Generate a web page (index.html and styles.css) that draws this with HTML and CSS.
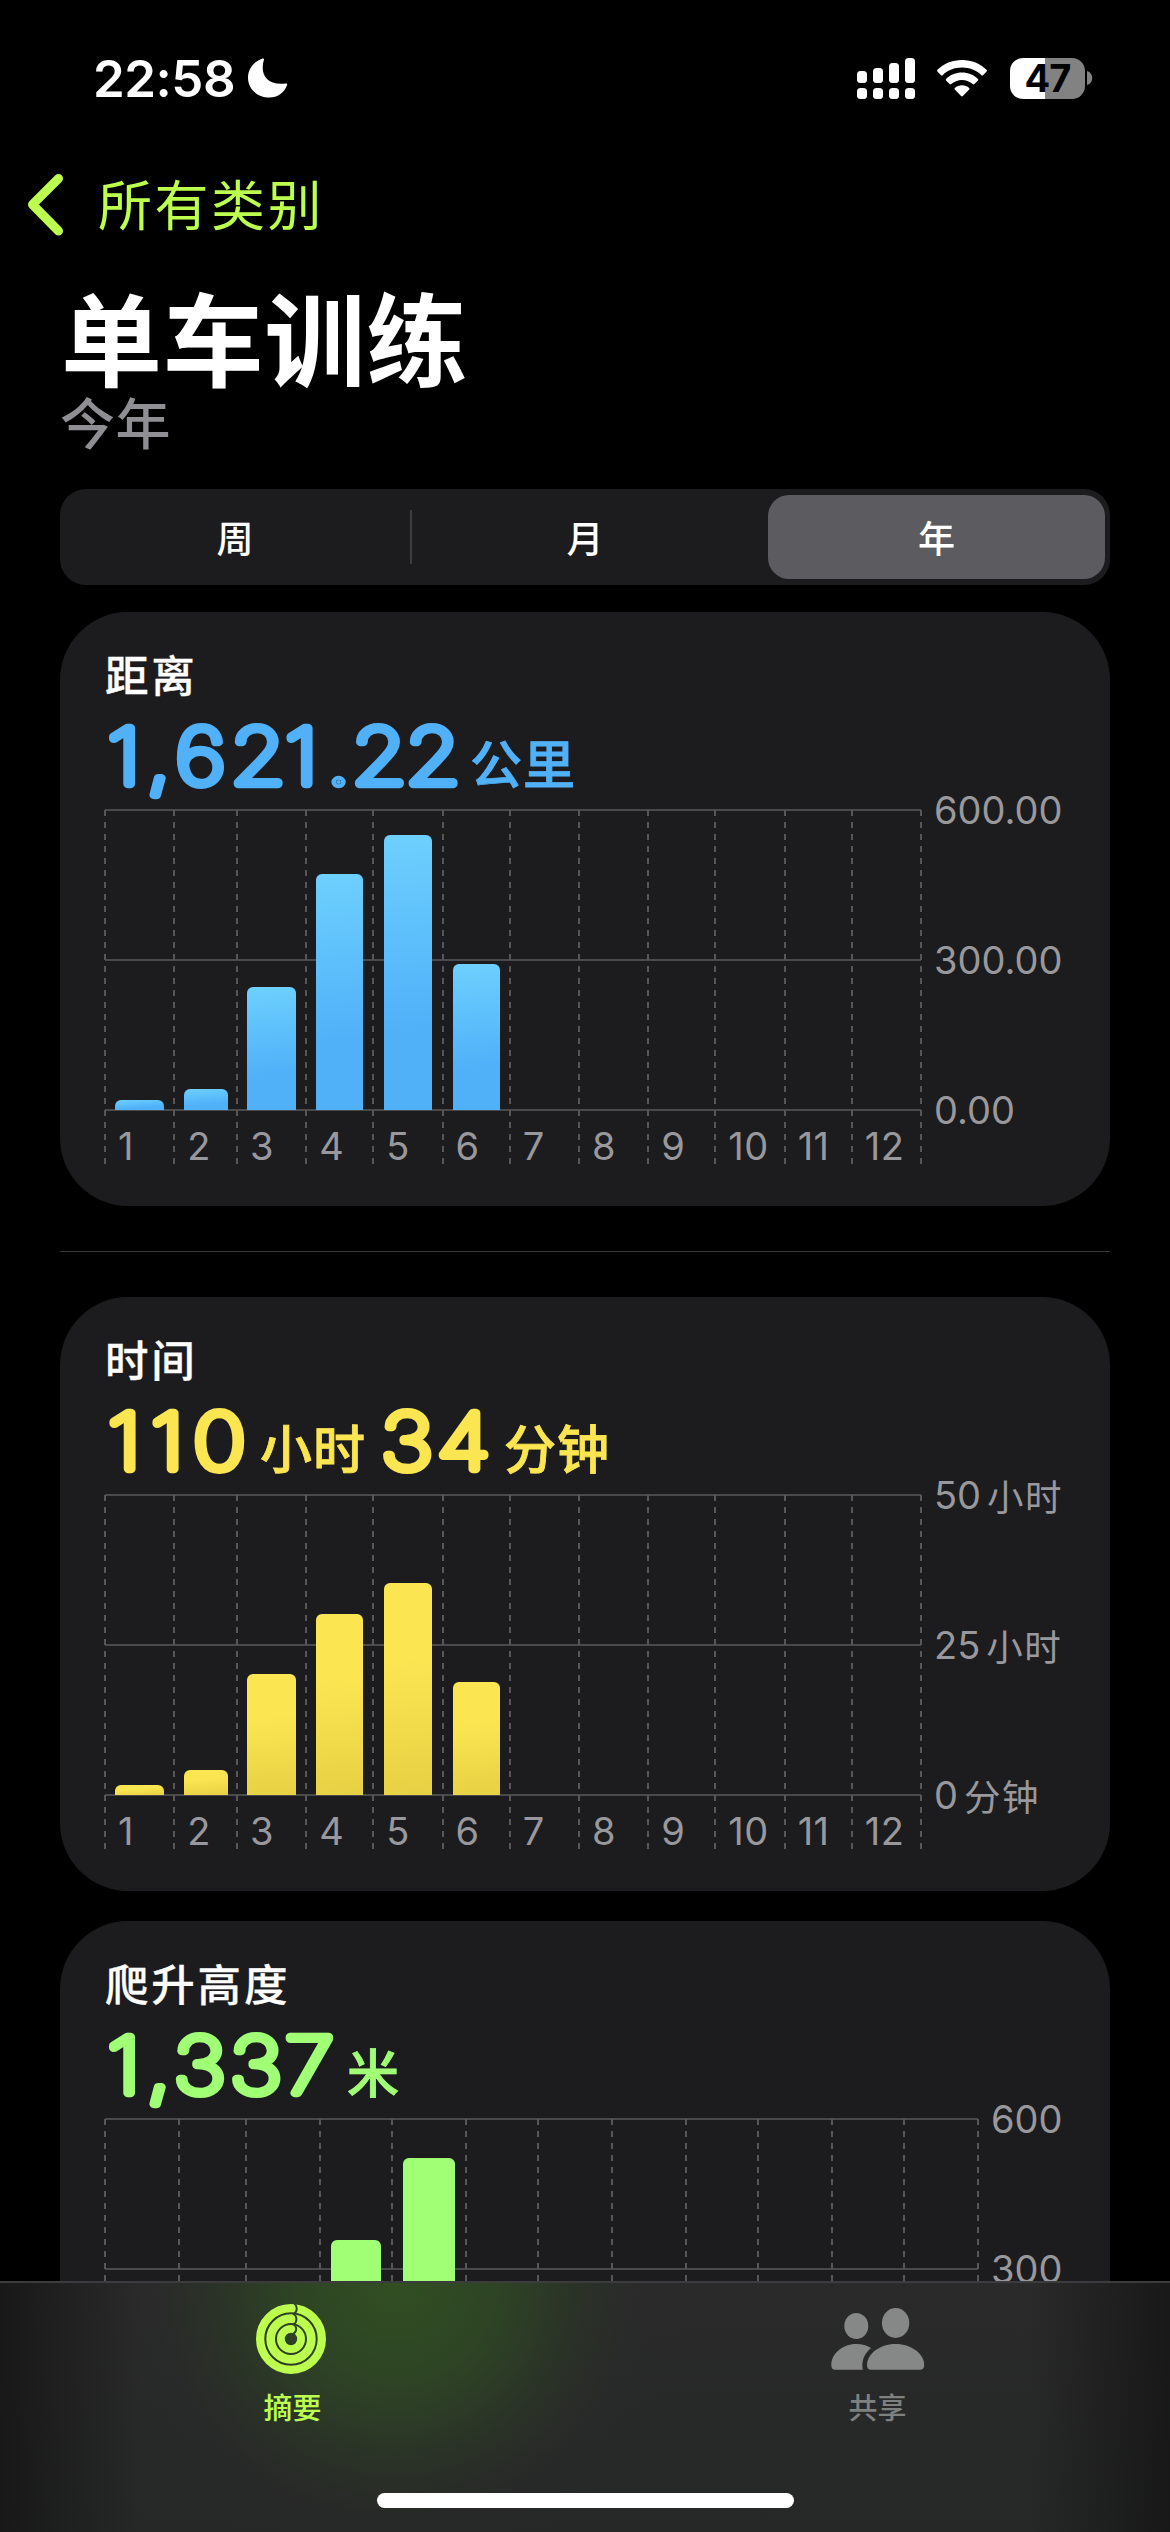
FILE: index.html
```html
<!DOCTYPE html>
<html lang="zh-CN">
<head>
<meta charset="utf-8">
<title>单车训练</title>
<link rel="stylesheet" href="styles.css">
</head>
<body>
<div class="screen">
  <header class="status">
    <div class="clock">22:58</div>
    <svg class="moon" width="40" height="40" viewBox="0 0 40 40"><path d="M14.6 .6C15.5 .1 16.2 .6 16 1.5C12 14 16.500 27.600 37.500 25.500C39 25.200 39.500 26 39 27.200C36 35 29.500 39.500 21.500 39.500C9 39.500 0 30.800 0 19.600C0 10.800 6 3.500 14.600 .6Z"/></svg>
    <div class="status-right">
      <svg class="signal" width="58" height="41" viewBox="0 0 58 41">
        <rect x="0" y="13" width="10" height="12" rx="3.500"/><rect x="16" y="10" width="10" height="15" rx="3.500"/><rect x="32" y="5" width="10" height="20" rx="3.500"/><rect x="48" y="0" width="10" height="25" rx="3.500"/>
        <rect x="0" y="30" width="10" height="11" rx="3.500"/><rect x="16" y="30" width="10" height="11" rx="3.500"/><rect x="32" y="30" width="10" height="11" rx="3.500"/><rect x="48" y="30" width="10" height="11" rx="3.500"/>
      </svg>
      <svg class="wifi" width="50" height="37" viewBox="0 0 50 37">
        <path d="M25 0C34.700 0 43.400 3.700 49.600 9.800Q50.300 10.600 49.600 11.400L46 15.200Q45.200 15.900 44.400 15.200C39.200 10.300 32.500 7.600 25 7.600S10.800 10.300 5.600 15.200Q4.800 15.900 4 15.200L.4 11.400Q-.3 10.600 .4 9.800C6.600 3.700 15.300 0 25 0Z"/>
        <path d="M25 12.600C31.200 12.600 36.800 15 41 18.900Q41.700 19.700 41 20.500L37.400 24.100Q36.600 24.800 35.800 24.100C32.900 21.500 29.200 19.900 25 19.900S17.100 21.500 14.200 24.100Q13.400 24.800 12.600 24.100L9 20.500Q8.300 19.700 9 18.900C13.200 15 18.800 12.600 25 12.600Z"/>
        <path d="M25 25.300C27.700 25.300 30.300 26.300 32.200 28Q32.900 28.800 32.200 29.600L25.900 36.100Q25 36.900 24.100 36.100L17.800 29.600Q17.100 28.800 17.800 28C19.700 26.300 22.300 25.300 25 25.300Z"/>
      </svg>
      <div class="battery"><span class="level">47</span><svg class="nub" width="6" height="14" viewBox="0 0 6 14"><path d="M0 0C3.500 1 5.300 3.800 5.300 7S3.500 13 0 14Z"/></svg></div>
    </div>
  </header>

  <nav class="back">
    <svg width="38" height="64" viewBox="0 0 38 64"><path d="M32.500 5.500L6.500 31.500L32.500 58" /></svg>
    <span>所有类别</span>
  </nav>

  <h1 class="title">单车训练</h1>
  <div class="subtitle">今年</div>

  <div class="segments">
    <div class="segment">周</div>
    <div class="segment divided">月</div>
    <div class="segment selected">年</div>
  </div>

  <section class="card blue">
    <h2>距离</h2>
    <svg class="value" width="960" height="104">
      <text class="num" x="92.6 126.7 151 198.6 245.7 281.4 303 349.4" y="79.5" transform="scale(1.16 1)">1,621.22</text>
      <text class="unit" x="470" y="79">公里</text>
    </svg>
    <div class="chart">
      <div class="plot">
        <div class="month"><i style="height:10px"></i><b>1</b></div>
        <div class="month"><i style="height:21px"></i><b>2</b></div>
        <div class="month"><i style="height:123px"></i><b>3</b></div>
        <div class="month"><i style="height:236px"></i><b>4</b></div>
        <div class="month"><i style="height:275px"></i><b>5</b></div>
        <div class="month"><i style="height:146px"></i><b>6</b></div>
        <div class="month"><b>7</b></div>
        <div class="month"><b>8</b></div>
        <div class="month"><b>9</b></div>
        <div class="month"><b>10</b></div>
        <div class="month"><b>11</b></div>
        <div class="month"><b>12</b></div>
      </div>
      <div class="scale"><span>600.00</span><span>300.00</span><span>0.00</span></div>
    </div>
  </section>

  <hr class="rule">

  <section class="card yellow">
    <h2>时间</h2>
    <svg class="value" width="960" height="104">
      <text class="num" x="93.1 130.2 166.4" y="79.5" transform="scale(1.16 1)">110</text>
      <text class="unit" x="260" y="79">小时</text>
      <text class="num" x="328.4 376.7" y="79.5" transform="scale(1.16 1)">34</text>
      <text class="unit" x="504" y="79">分钟</text>
    </svg>
    <div class="chart">
      <div class="plot">
        <div class="month"><i style="height:10px"></i><b>1</b></div>
        <div class="month"><i style="height:25px"></i><b>2</b></div>
        <div class="month"><i style="height:121px"></i><b>3</b></div>
        <div class="month"><i style="height:181px"></i><b>4</b></div>
        <div class="month"><i style="height:212px"></i><b>5</b></div>
        <div class="month"><i style="height:113px"></i><b>6</b></div>
        <div class="month"><b>7</b></div>
        <div class="month"><b>8</b></div>
        <div class="month"><b>9</b></div>
        <div class="month"><b>10</b></div>
        <div class="month"><b>11</b></div>
        <div class="month"><b>12</b></div>
      </div>
      <div class="scale"><span>50<em>小时</em></span><span>25<em>小时</em></span><span>0<em>分钟</em></span></div>
    </div>
  </section>

  <section class="card green">
    <h2>爬升高度</h2>
    <svg class="value" width="960" height="104">
      <text class="num" x="92.6 126.7 149.8 198.2 245.7" y="79.5" transform="scale(1.16 1)">1,337</text>
      <text class="unit" x="347" y="79">米</text>
    </svg>
    <div class="chart">
      <div class="plot">
        <div class="month"></div>
        <div class="month"></div>
        <div class="month"></div>
        <div class="month"><i style="height:179px"></i></div>
        <div class="month"><i style="height:261px"></i></div>
        <div class="month"></div>
        <div class="month"></div>
        <div class="month"></div>
        <div class="month"></div>
        <div class="month"></div>
        <div class="month"></div>
        <div class="month"></div>
      </div>
      <div class="scale"><span>600</span><span>300</span></div>
    </div>
  </section>

  <footer class="tabbar">
    <div class="tab active">
      <svg class="rings" width="70" height="70" viewBox="0 0 70 70">
        <g fill="none" stroke="#bcff4f">
          <circle cx="35" cy="35" r="30.850" stroke-width="8.300"/>
          <circle cx="35" cy="35" r="20.350" stroke-width="8.700"/>
          <circle cx="35" cy="35" r="10.100" stroke-width="7.800"/>
        </g>
        <g fill="none" stroke="#2e4425" stroke-width="1.900">
          <path d="M38 -1C41.500 2 42 7.500 37.500 10"/>
          <path d="M37 9.500C41.500 12 41.500 18 37.500 20.500"/>
          <path d="M37 20C41.300 22.500 41.300 27.500 37 30"/>
        </g>
      </svg>
      <span>摘要</span>
    </div>
    <div class="tab">
      <svg width="94" height="70" viewBox="0 0 94 70">
        <g fill="#868887">
          <ellipse cx="25.300" cy="22" rx="12" ry="13"/>
          <ellipse cx="64.600" cy="19" rx="13.700" ry="15"/>
          <path d="M4 65.700Q.3 65.700 .3 61C.3 50 11 40 25.300 40C31 40 36 41.300 40 44C34 49 30 56 31.800 65.700Z"/>
          <path d="M40 65.700Q36 65.700 36 61C36 50.500 48 40 64.600 40S93.200 50.500 93.200 61Q93.200 65.700 89 65.700Z"/>
        </g>
      </svg>
      <span>共享</span>
    </div>
    <div class="home"></div>
  </footer>
</div>
</body>
</html>
```
FILE: styles.css
```css
* { box-sizing: border-box; }
body { margin: 0; background: #000; }
.screen {
  position: relative;
  display: flex;
  flex-direction: column;
  width: 1170px;
  height: 2532px;
  overflow: hidden;
  background: #000;
  color: #fff;
  font-family: Inter, "Noto Sans CJK SC", sans-serif;
}
.screen > * { flex: none; }

.status {
  display: flex;
  align-items: center;
  height: 156px;
  padding: 0 77px 0 93px;
}
.clock { width: 155px; font-size: 51px; font-weight: 600; letter-spacing: -.5px; white-space: nowrap; }
.moon, .signal, .wifi { fill: #fff; }
.status-right { display: flex; align-items: center; margin-left: auto; }
.wifi { margin-left: 22px; }
.battery { display: flex; align-items: center; gap: 2px; margin-left: 23px; }
.level {
  width: 75px;
  height: 41px;
  border-radius: 13px;
  background: linear-gradient(90deg, #fff 35px, #828282 35px);
  color: #000;
  font-size: 38px;
  font-weight: 700;
  line-height: 41px;
  letter-spacing: -1px;
  text-align: center;
}
.nub { fill: #828282; }

.back {
  display: flex;
  align-items: center;
  gap: 34px;
  height: 97px;
  padding-left: 26px;
  color: #bcff4f;
  font-size: 54px;
  letter-spacing: 2.5px;
}
.back svg { fill: none; stroke: #bcff4f; stroke-width: 9; stroke-linecap: round; stroke-linejoin: round; }
.back span { padding-bottom: 5px; }

.title { height: 106px; margin: 36px 0 0 61px; font-size: 101px; font-weight: 700; line-height: 106px; letter-spacing: .8px; }
.subtitle { height: 58px; margin-left: 60px; color: #8e8e93; font-size: 55px; font-weight: 500; line-height: 58px; letter-spacing: .5px; }

.segments {
  display: grid;
  grid-template-columns: repeat(3, 1fr);
  height: 96px;
  margin: 36px 60px 27px;
  border-radius: 26px;
  background: #1c1c1e;
  font-size: 37px;
  font-weight: 500;
}
.segment { display: flex; align-items: center; justify-content: center; padding-bottom: 1px; }
.segment.divided { background: linear-gradient(#3d3d40, #3d3d40) 0 50% / 2px 54px no-repeat; }
.segment.selected { margin: 6px 5px 6px 8px; border-radius: 21px; background: #5b5b60; }

.card { width: 1050px; height: 594px; margin: 0 60px; padding-top: 34px; border-radius: 68px; background: #1c1c1e; }
.card h2 { height: 59px; margin: 0 0 0 45px; font-size: 43.5px; font-weight: 500; line-height: 60px; letter-spacing: 2.8px; -webkit-text-stroke: .3px; }
.value { display: block; height: 104px; margin-left: -60px; overflow: visible; fill: var(--tint); }
.num { font-size: 77px; font-weight: 100; stroke: var(--tint); stroke-width: 8.4px; stroke-linejoin: round; }
.unit { font-size: 52px; font-weight: 500; letter-spacing: 1px; stroke: var(--tint); stroke-width: .8px; }
.blue { --tint: #50b1f9; --bar: linear-gradient(175deg, #6dd0fd, #50b1f9 70%); }
.yellow { --tint: #fbe652; --bar: linear-gradient(175deg, #fbe652 35%, #e7d144); }
.green { --tint: #a1ff76; --bar: linear-gradient(175deg, #a1ff76 60%, #93ea6c); }

.chart { display: flex; gap: 12px; margin: 0 45px; }
.plot {
  display: grid;
  flex: 0 0 817px;
  grid-template-columns: 31fr 28fr 31fr 30fr 31fr 30fr 31fr 31fr 30fr 31fr 30fr 31fr;
  height: 355px;
  padding-right: 1px;
  background:
    repeating-linear-gradient(#57575a 0 6px, transparent 6px 12px) 100% 1px / 2px 354px no-repeat,
    linear-gradient(#4a4a4c, #4a4a4c) 0 0 / 816px 2px no-repeat,
    linear-gradient(#4a4a4c, #4a4a4c) 0 150px / 816px 2px no-repeat,
    linear-gradient(#4a4a4c, #4a4a4c) 0 300px / 816px 2px no-repeat;
}
.month {
  display: flex;
  flex-direction: column;
  align-items: center;
  justify-content: flex-end;
  margin-left: -1px;
  padding-left: 1px;
  background: repeating-linear-gradient(#57575a 0 6px, transparent 6px 12px) 0 1px / 2px 354px no-repeat;
}
.month i { width: 70%; border-radius: 6px 6px 0 0; background: var(--bar); }
.month b { align-self: stretch; height: 54px; padding-left: 13px; color: #98989d; font-size: 38px; font-weight: 400; line-height: 73px; letter-spacing: .5px; }
.scale { margin-top: -74px; color: #98989d; font-size: 38px; }
.scale span { display: flex; align-items: center; height: 150px; white-space: nowrap; }
.scale em { margin-left: 6px; font-size: 36.5px; font-style: normal; letter-spacing: 1.500px; }
.green .plot { flex-basis: 874px; background-size: 2px 354px, 873px 2px, 873px 2px, 873px 2px; }
.green .month { padding-bottom: 54px; }

.rule { width: 1050px; height: 1px; margin: 45px 60px; border: 0; background: #38383a; }
.green.card { margin-top: 30px; }

.tabbar {
  position: absolute;
  left: 0;
  right: 0;
  bottom: 0;
  display: grid;
  grid-template-columns: 1fr 1fr;
  height: 251px;
  border-top: 2px solid #3c3c3e;
  background:
    linear-gradient(90deg, rgba(20,20,20,.8), rgba(20,20,20,0) 12%, rgba(20,20,20,0) 88%, rgba(20,20,20,.8)),
    radial-gradient(ellipse 290px 290px at 395px 0, #314f22 0, #2e4425 35%, rgba(43,54,38,.7) 62%, rgba(41,43,41,.3) 82%, rgba(41,41,41,0)),
    linear-gradient(#2a2a2b, #262727);
}
.tab { display: flex; flex-direction: column; align-items: center; padding-top: 21px; color: #7f8180; font-size: 29px; font-weight: 500; }
.tab span { margin-top: 13px; line-height: 44px; }
.tab.active { color: #bcff4f; }
.rings { margin-left: -3px; }
.home { position: absolute; left: 377px; bottom: 24px; width: 417px; height: 15px; border-radius: 8px; background: #fff; }
```
